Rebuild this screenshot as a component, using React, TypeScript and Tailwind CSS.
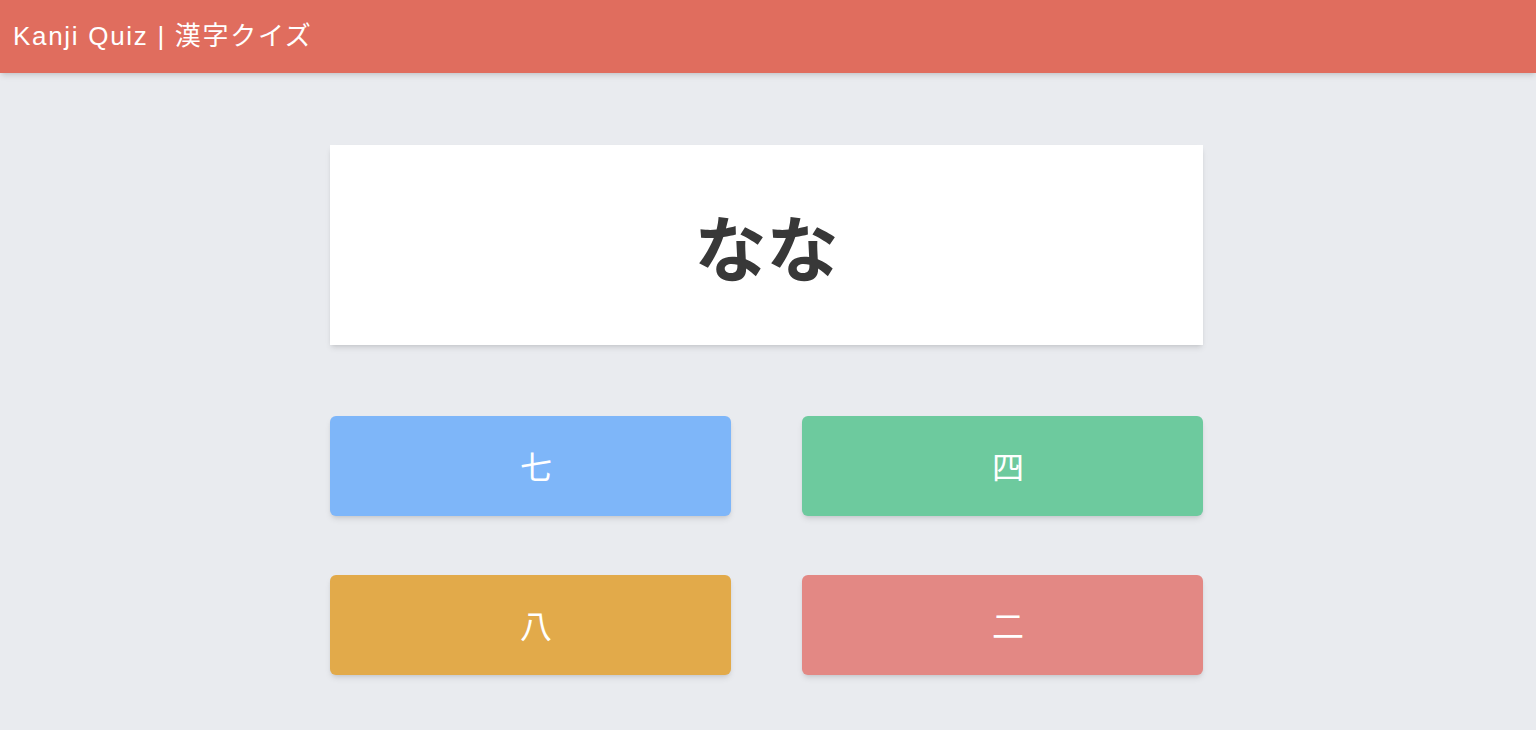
const choices = [
  { label: "七", color: "bg-[#7eb6f9]" },
  { label: "四", color: "bg-[#6dca9e]" },
  { label: "八", color: "bg-[#e2aa4a]" },
  { label: "二", color: "bg-[#e38884]" },
];

const App = () => {
  return (
    <div className="min-h-screen bg-[#e9ebef] font-['Liberation_Sans','Noto_Sans_CJK_JP',sans-serif]">
      <header className="h-[73px] bg-[#e06d5e] flex items-center px-[13px] shadow-md">
        <h1 className="text-white text-[26px] tracking-[1.7px]">Kanji Quiz | 漢字クイズ</h1>
      </header>
      <main className="w-[873px] ml-[330px] pt-[72px]">
        <div className="h-[200px] bg-white shadow-md flex items-center justify-center">
          <span className="text-[72px] font-bold text-[#383838] font-['Noto_Sans_CJK_JP',sans-serif]">
            なな
          </span>
        </div>
        <div className="grid grid-cols-2 gap-x-[71px] gap-y-[59px] mt-[71px]">
          {choices.map((c) => (
            <button
              key={c.label}
              className={`${c.color} h-[100px] pl-[11px] pb-[3px] rounded-md shadow-md text-white text-[32px] leading-none font-['Noto_Sans_CJK_JP',sans-serif] font-normal`}
            >
              {c.label}
            </button>
          ))}
        </div>
      </main>
    </div>
  );
};

export default App;
